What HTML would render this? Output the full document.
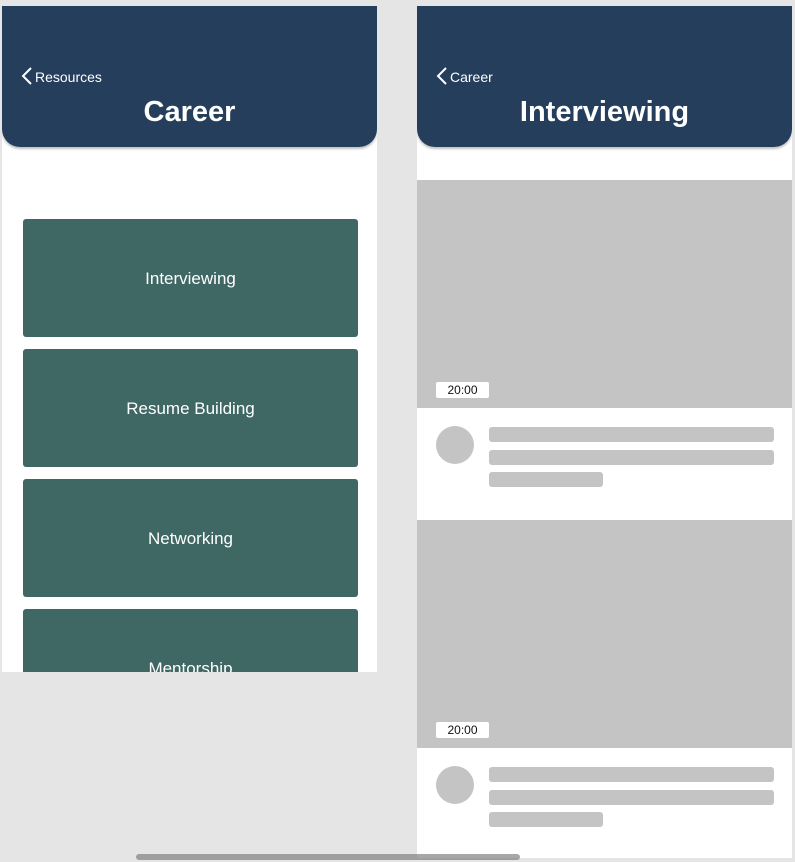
<!DOCTYPE html>
<html><head><style>
body{margin:0;width:795px;height:862px;background:#e5e5e5;position:relative;overflow:hidden;font-family:"Liberation Sans",sans-serif}
.p{position:absolute;background:#fff;overflow:hidden}
.h{position:absolute;left:0;top:0;width:100%;height:141px;background:#243e5c;border-radius:0 0 18px 18px;box-shadow:0 2px 2px rgba(0,0,0,.25);color:#fff}
.back{position:absolute;top:61px;left:19px;font-size:14px}
.back svg{vertical-align:-3px;margin-right:2px}
.t{position:absolute;top:90px;width:100%;text-align:center;font-size:29px;font-weight:bold}
.b{position:absolute;left:21px;width:335px;height:118px;background:#3f6764;border-radius:3px;color:#fff;font-size:17px;display:flex;align-items:center;justify-content:center}
.v{position:absolute;left:0;width:375px;height:228px;background:#c4c4c4}
.bd{position:absolute;left:19px;width:53px;height:16px;background:#fff;border-radius:2px;font-size:12px;text-align:center;line-height:17px;color:#111}
.c{position:absolute;left:19px;width:38px;height:38px;border-radius:50%;background:#c4c4c4}
.r{position:absolute;left:72px;height:15px;background:#c4c4c4;border-radius:3px}
</style></head><body>
<div class="p" style="left:2px;top:6px;width:375px;height:666px">
<div class="h"><div class="back"><svg width="12" height="18" viewBox="0 0 12 18"><path d="M10 1L2 9l8 8" stroke="#fff" stroke-width="2" fill="none"/></svg>Resources</div><div class="t">Career</div></div>
<div class="b" style="top:213px;padding-top:2px;box-sizing:border-box">Interviewing</div>
<div class="b" style="top:343px;padding-top:2px;box-sizing:border-box">Resume Building</div>
<div class="b" style="top:473px;padding-top:2px;box-sizing:border-box">Networking</div>
<div class="b" style="top:603px;padding-top:2px;box-sizing:border-box">Mentorship</div>
</div>
<div class="p" style="left:417px;top:6px;width:375px;height:852px">
<div class="h"><div class="back"><svg width="12" height="18" viewBox="0 0 12 18"><path d="M10 1L2 9l8 8" stroke="#fff" stroke-width="2" fill="none"/></svg>Career</div><div class="t">Interviewing</div></div>
<div class="v" style="top:174px"></div>
<div class="bd" style="top:376px">20:00</div>
<div class="c" style="top:420px"></div>
<div class="r" style="top:421px;width:285px"></div>
<div class="r" style="top:444px;width:285px"></div>
<div class="r" style="top:466px;width:114px"></div>
<div class="v" style="top:514px"></div>
<div class="bd" style="top:716px">20:00</div>
<div class="c" style="top:760px"></div>
<div class="r" style="top:761px;width:285px"></div>
<div class="r" style="top:784px;width:285px"></div>
<div class="r" style="top:806px;width:114px"></div>
</div>
<div style="position:absolute;left:136px;top:854px;width:384px;height:6px;border-radius:3px;background:rgba(120,120,120,.65)"></div>
</body></html>
